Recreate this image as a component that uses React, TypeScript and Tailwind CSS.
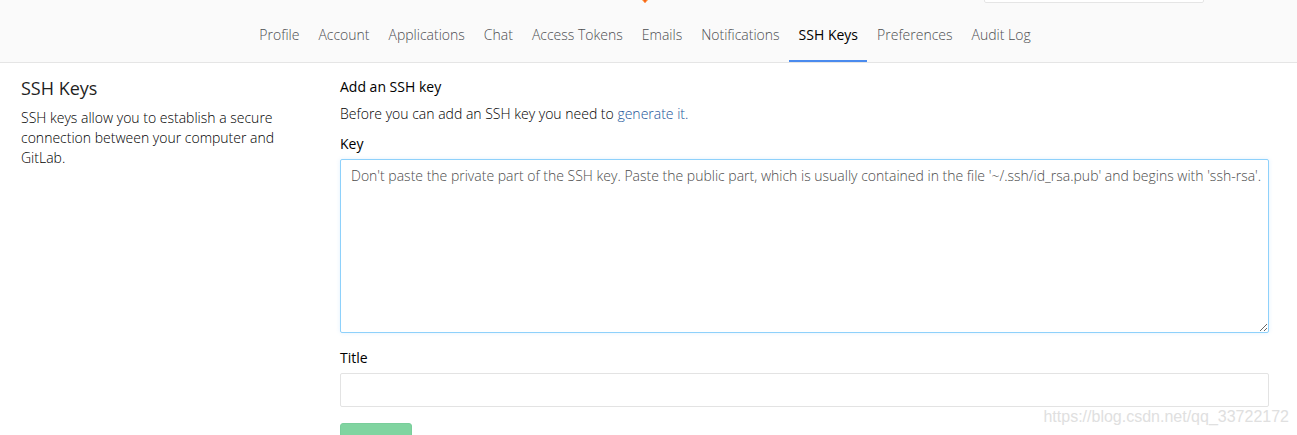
import React from "react";

const tabs = [
  "Profile",
  "Account",
  "Applications",
  "Chat",
  "Access Tokens",
  "Emails",
  "Notifications",
  "SSH Keys",
  "Preferences",
  "Audit Log",
];

function Header() {
  return (
    <header className="border-b border-[#e5e5e5] bg-[#fafafa] pr-2">
      <div className="grid h-[3px] grid-cols-[1fr_auto_1fr] grid-rows-[3px] items-end overflow-hidden">
        <span />
        <svg width="36" height="36" viewBox="0 0 36 36" aria-hidden="true">
          <path fill="#fc8a26" d="M18 36 1 19 6 4l6 13h12L30 4l5 15z" />
          <path fill="#f2501f" d="M18 36 12 17h12z" />
        </svg>
        <input
          type="search"
          aria-label="Search"
          className="mr-[85px] h-[34px] w-[220px] justify-self-end rounded-xs border border-[#e5e5e5] bg-white"
        />
      </div>
      <nav className="flex justify-center pt-[9px]">
        {tabs.map((tab) => (
          <a
            key={tab}
            href="#"
            className={
              tab === "SSH Keys"
                ? "border-b-2 border-[#4a8bee] pt-[13px] pr-[9px] pb-[15px] pl-[10px] font-medium text-black"
                : "border-b-2 border-transparent pt-[13px] pr-[9px] pb-[15px] pl-[10px] text-[#4c4d50]"
            }
          >
            {tab}
          </a>
        ))}
      </nav>
    </header>
  );
}

export default function App() {
  return (
    <div className="relative h-screen overflow-hidden bg-white font-['Open_Sans',sans-serif] text-[14px] leading-5 font-light text-black">
      <Header />
      <main className="flex gap-[7px] pt-[15px] pr-7 pl-[21px]">
        <aside className="w-1/4 shrink-0 pr-14">
          <h4 className="mb-[10px] text-[18px] font-medium text-[#1f1f1f]">
            SSH Keys
          </h4>
          <p>
            SSH keys allow you to establish a secure connection between your
            computer and GitLab.
          </p>
        </aside>
        <form className="min-w-0 flex-1">
          <h5 className="mt-[-1px] font-medium">Add an SSH key</h5>
          <p className="mt-[7px]">
            Before you can add an SSH key you need to{" "}
            <a href="#" className="text-[#1b5499]">
              generate it.
            </a>
          </p>
          <label htmlFor="key" className="mt-[10px] block font-medium">
            Key
          </label>
          <textarea
            id="key"
            placeholder="Don't paste the private part of the SSH key. Paste the public part, which is usually contained in the file '~/.ssh/id_rsa.pub' and begins with 'ssh-rsa'."
            className="mt-[5px] block h-[174px] w-full rounded-xs border border-[#8ed1fb] py-[6px] pr-0 pl-[10px] shadow-[0_0_4px_#73bafc33] outline-none placeholder:text-[#4c4c4c]"
          />
          <label htmlFor="title" className="mt-[15px] block font-medium">
            Title
          </label>
          <input
            id="title"
            type="text"
            className="mt-[5px] block h-[34px] w-full rounded-xs border border-[#e3e3e3] px-[10px]"
          />
          <button
            type="button"
            disabled
            aria-label="Add key"
            className="mt-4 h-[34px] w-[72px] rounded-[3px] border border-[#79ce9b] bg-[#80d4a0]"
          />
        </form>
      </main>
      <span className="absolute right-2 bottom-2 font-['Liberation_Sans',sans-serif] text-[16px] font-normal text-[#e0e0e0]">
        https://blog.csdn.net/qq_33722172
      </span>
    </div>
  );
}
